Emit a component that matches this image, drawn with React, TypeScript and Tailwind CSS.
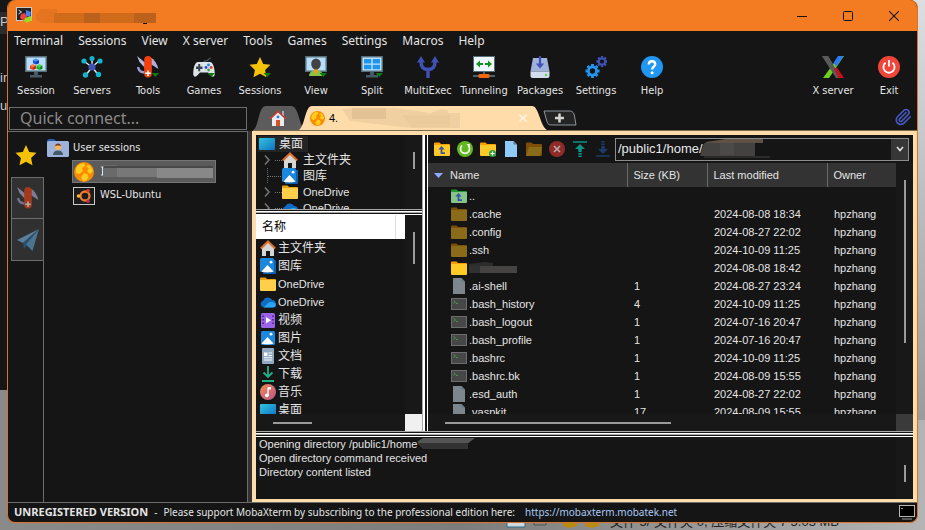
import type { ReactNode } from "react";
import { Paperclip } from "lucide-react";

const menus = ["Terminal", "Sessions", "View", "X server", "Tools", "Games", "Settings", "Macros", "Help"];

function Svg({ size = 16, box = 16, children }: { size?: number; box?: number; children: ReactNode }) {
  return (
    <svg width={size} height={size} viewBox={`0 0 ${box} ${box}`} className="shrink-0" aria-hidden="true">
      {children}
    </svg>
  );
}

/* ---------- toolbar icons, 22px grid ---------- */

function Monitor({ children, fill = "#b9defa" }: { children?: ReactNode; fill?: string }) {
  return (
    <>
      <rect width="22" height="16" y="0" fill="#546e7a" />
      <rect x="1.5" y="1.5" width="19" height="13" fill={fill} />
      <path d="M9 16h4v3h4v2.5H5V19h4z" fill="#455a64" />
      {children}
    </>
  );
}

function Cube({ x, y, a, b, c }: { x: number; y: number; a: string; b: string; c: string }) {
  return (
    <g transform={`translate(${x} ${y})`}>
      <path d="M3 0l3 1.4-3 1.5-3-1.5z" fill={a} />
      <path d="M0 1.4l3 1.5V6L0 4.7z" fill={b} />
      <path d="M6 1.4L3 2.9V6l3-1.3z" fill={c} />
    </g>
  );
}

const DownMark = () => <path d="M14.5 17h7.5l-3.7 4z" fill="#0d7a12" />;

function Knife({ mark = true }: { mark?: boolean }) {
  return (
    <>
      <path d="M0 0l8 6.500v5.500L2.500 6z" fill="#b7b6dc" />
      <path d="M13.500 1.500c4 2 6.500 6 8 11.500L13.500 8z" fill="#b0afd8" />
      <path d="M1 11c1 5 4 5.500 8 5.500" fill="none" stroke="#9d9ccd" strokeWidth="2.400" />
      <rect x="7.200" y="0" width="7.600" height="21.500" rx="3.800" fill="#f4400f" />
      <path d="M10.200 14.500h1.600v2h2v1.600h-2v2h-1.600v-2h-2v-1.600h2z" fill="#fff" />
      {mark && <DownMark />}
    </>
  );
}

const star = "M11 1l3.200 6.900 7.300.9-5.400 5.100 1.400 7.400L11 17.700l-6.500 3.600 1.400-7.400L.5 8.800l7.300-.9z";

function Gear({ cx, cy, r, fill }: { cx: number; cy: number; r: number; fill: string }) {
  const spokes = [0, 45, 90, 135];
  return (
    <g transform={`translate(${cx} ${cy})`} fill="none" stroke={fill}>
      <circle r={r * 0.58} strokeWidth={r * 0.4} />
      {spokes.map((a) => (
        <path
          key={a}
          d={`M0 ${-r}V${-r * 0.7}M0 ${r * 0.7}V${r}`}
          strokeWidth={r * 0.42}
          transform={`rotate(${a})`}
        />
      ))}
    </g>
  );
}

const toolIcons: Record<string, ReactNode> = {
  Session: (
    <Monitor>
      <Cube x={8} y={2.5} a="#4d8dff" b="#1457e0" c="#0b3fb5" />
      <Cube x={5} y={8} a="#ff7a4d" b="#f04a1c" c="#c9300b" />
      <Cube x={11.500} y={8} a="#4ddc50" b="#14b51c" c="#0a8f12" />
    </Monitor>
  ),
  Servers: (
    <>
      <path d="M11 11V3M11 11L4 6M11 11l7-6M11 11l6 7.500M11 11l-6 8" stroke="#d5e6ee" strokeWidth="1.500" />
      <circle cx="11" cy="11" r="3.600" fill="#3f51b5" />
      <g fill="#12b5cb">
        <circle cx="11" cy="2.500" r="2.500" />
        <circle cx="3" cy="5" r="2.600" />
        <circle cx="19" cy="5" r="2.600" />
        <circle cx="4.500" cy="19" r="2.700" />
        <circle cx="17.500" cy="18.500" r="2.700" />
      </g>
    </>
  ),
  Tools: <Knife />,
  Games: (
    <>
      <path d="M10.500 7c0-3 3-1.500 4.500-3 1-1 1.500-2 3-2" fill="none" stroke="#4a5c66" strokeWidth="1.200" />
      <path d="M5 6h12c3 0 4.500 5.500 4.800 11 .2 4-2.300 4.500-4 2.500L15 16.500H7l-2.800 3c-1.700 2-4.200 1.500-4-2.500C.5 11.500 2 6 5 6z" fill="#dfe3e6" />
      <path d="M5.200 8h2v2.500h2.300v2.500H7.200v2.300h-2V13H3v-2.500h2.200z" fill="#37474f" />
      <circle cx="15.500" cy="9" r="1.400" fill="#1e88e5" />
      <circle cx="13" cy="11.500" r="1.400" fill="#1e4fe5" />
      <circle cx="18.200" cy="11.500" r="1.400" fill="#e53935" />
      <circle cx="15.600" cy="14" r="1.400" fill="#43a047" />
      <DownMark />
    </>
  ),
  Favorites: (
    <>
      <path d={star} fill="#f5c20a" />
      <DownMark />
    </>
  ),
  View: (
    <>
      <rect width="22" height="16" fill="#546e7a" />
      <rect x="1.500" y="1.500" width="19" height="13" fill="#b9defa" />
      <path d="M4 20c0-3 2-5 5-5.500h4c3 .5 5 2.500 5 5.500z" fill="#8bc34a" />
      <path d="M9 12h4v4l-2 2-2-2z" fill="#e8a21c" />
      <ellipse cx="11" cy="8" rx="4.800" ry="5.500" fill="#424242" />
      <DownMark />
    </>
  ),
  Split: (
    <Monitor fill="#bfe3fb">
      <path d="M3 3h7.300v4.500H3zM11.700 3H19v4.500h-7.300zM3 8.700h7.300v4.500H3zM11.700 8.700H19v4.500h-7.300z" fill="#1e96f0" />
      <DownMark />
    </Monitor>
  ),
  MultiExec: (
    <>
      <path d="M4 5c0 5 1 8 7 8.500 6-.5 7-3.500 7-8.500M11 13v9" fill="none" stroke="#3f51b5" strokeWidth="3.500" />
      <path d="M0 6.500L4 0l4 6.500zM14 6.500L18 0l4 6.500z" fill="#3f51b5" />
    </>
  ),
  Tunneling: (
    <>
      <rect width="22" height="16" fill="#546e7a" />
      <rect x="1" y="1" width="20" height="14" fill="#edf6fb" />
      <path d="M3 8l4-3.500V7h3v2H7v2.500zM19 8l-4-3.500V7h-3v2h3v2.500z" fill="#109020" />
      <path d="M11 16v3M0 20h22" stroke="#607d8b" strokeWidth="1.500" />
      <rect x="5.500" y="18" width="11" height="4" rx="1" fill="#f4660f" />
    </>
  ),
  Packages: (
    <>
      <path d="M4 2h14l2.500 13.500h-19z" fill="#9fb2dc" />
      <path d="M1.500 15.500h19V20a2 2 0 0 1-2 2h-15a2 2 0 0 1-2-2z" fill="#d3dcec" />
      <path d="M11 0v9" stroke="#3f51b5" strokeWidth="2.200" />
      <path d="M6.800 7.500h8.400L11 12.500z" fill="#3f51b5" />
      <circle cx="17" cy="19" r="1.200" fill="#5fcf4a" />
    </>
  ),
  Settings: (
    <>
      <Gear cx={7.500} cy={15} r={7} fill="#2196f3" />
      <Gear cx={17} cy={5.500} r={5.500} fill="#3f51b5" />
    </>
  ),
  Help: (
    <>
      <circle cx="11" cy="11" r="11" fill="#2196f3" />
      <path d="M7.800 8.500c0-2 1.300-3.200 3.200-3.200s3.200 1.200 3.200 2.900c0 2.500-3 2.500-3 5.300" fill="none" stroke="#fff" strokeWidth="2.400" />
      <circle cx="11.100" cy="16.700" r="1.500" fill="#fff" />
    </>
  ),
  "X server": (
    <>
      <path d="M17 0h5L7 22H1z" fill="#6fcf1e" />
      <path d="M16 0h5.500l-7 10.500-3-3.500z" fill="#2a7bf5" />
      <path d="M0 0h6l5 8-1.500 5z" fill="#555" />
      <path d="M0 0h6l13 22h-5z" fill="#5a5a5a" />
      <path d="M12 12.500l3-1L22 22h-5.500z" fill="#c3121b" />
    </>
  ),
  Exit: (
    <>
      <circle cx="11" cy="11" r="11" fill="#f0463a" />
      <path d="M7.500 6.800a5.600 5.600 0 1 0 7 0M11 4v6.500" fill="none" stroke="#fff" strokeWidth="1.800" />
    </>
  ),
};

const tools = [
  { icon: "Session", label: "Session" },
  { icon: "Servers", label: "Servers" },
  { icon: "Tools", label: "Tools" },
  { icon: "Games", label: "Games" },
  { icon: "Favorites", label: "Sessions" },
  { icon: "View", label: "View" },
  { icon: "Split", label: "Split" },
  { icon: "MultiExec", label: "MultiExec" },
  { icon: "Tunneling", label: "Tunneling" },
  { icon: "Packages", label: "Packages" },
  { icon: "Settings", label: "Settings" },
  { icon: "Help", label: "Help" },
];

function ToolButton({ icon, label }: { icon: string; label: string }) {
  return (
    <button className="flex w-14 shrink-0 flex-col items-center gap-[5px] pt-[5px] text-[11px] leading-4 text-[#e4e4e4]">
      <Svg size={22} box={22}>{toolIcons[icon]}</Svg>
      <span className="whitespace-nowrap">{label}</span>
    </button>
  );
}

/* ---------- 16px icons ---------- */

const HomeFolder = () => (
  <Svg>
    <path d="M2 7.500L8 2l6 5.500V16H10v-5H6v5H2z" fill="#d6d6d6" />
    <path d="M.8 8.500L8 1.500l7.200 7" fill="none" stroke="#dd6f2b" strokeWidth="2.100" />
  </Svg>
);

const Pictures = ({ stacked = false }: { stacked?: boolean }) => (
  <Svg>
    {stacked && <rect x="3" y="2" width="13" height="14" rx="1" fill="#0a63b0" />}
    <rect x={stacked ? 0 : 1} y={stacked ? 0 : 1} width="14" height="14" rx="1.500" fill="#1b87dd" />
    <path d="M1.500 13.500L7.500 7l6 6.500c-3 1.200-9 1.200-12 0z" fill="#fff" />
    <circle cx="11" cy="4.200" r="1.400" fill="#fff" />
  </Svg>
);

const Folder = ({ fill = "#ffcf4a", tab = "#e8a410", children }: { fill?: string; tab?: string; children?: ReactNode }) => (
  <Svg>
    <path d="M0 2.500a1 1 0 0 1 1-1h4.500L7 3h8a1 1 0 0 1 1 1v4H0z" fill={tab} />
    <path d="M0 4h16v10a1 1 0 0 1-1 1H1a1 1 0 0 1-1-1z" fill={fill} />
    {children}
  </Svg>
);

const Cloud = () => (
  <Svg>
    <path d="M4 13.500a3.600 3.600 0 0 1-.8-7 5 5 0 0 1 9-.5 3.800 3.800 0 0 1 .8 7.500z" fill="#0f6cc4" />
    <path d="M3.500 13.500L9 8.200c4-1 7 .5 6.900 3a2.500 2.500 0 0 1-2.500 2.300z" fill="#2aa3f0" />
  </Svg>
);

const Video = () => (
  <Svg>
    <rect x="1" y="1" width="14" height="15" rx="1.500" fill="#9a63e8" />
    <path d="M2.300 3.500h1.600v1.600H2.300zm0 3.500h1.600v1.600H2.300zm0 3.500h1.600v1.600H2.300zM12.200 3.500h1.600v1.600h-1.600zm0 3.500h1.600v1.600h-1.600zm0 3.500h1.600v1.600h-1.600z" fill="#4b1f96" />
    <path d="M6 5l5 3.300-5 3.300z" fill="#fff" />
  </Svg>
);

const Doc = () => (
  <Svg>
    <rect x="2" width="12" height="16" rx="1" fill="#8fa9c0" />
    <path d="M4 4.500h3.500V8H4z" fill="#fff" />
    <path d="M8.500 5h3.500M8.500 7.500h3.500M4 9.800h8M4 12h8" stroke="#fff" strokeWidth="1.100" />
  </Svg>
);

const Download = () => (
  <Svg>
    <path d="M8 0v10M3.500 6.500L8 11l4.500-4.500M2 15h12" fill="none" stroke="#1fb088" strokeWidth="1.800" />
  </Svg>
);

const Music = () => (
  <Svg>
    <defs>
      <linearGradient id="music" x1="0" y1="0" x2="1" y2="1">
        <stop offset="0" stopColor="#ef8a4c" />
        <stop offset="1" stopColor="#b8568f" />
      </linearGradient>
    </defs>
    <circle cx="8" cy="8" r="8" fill="url(#music)" />
    <path d="M8 3.500v8" stroke="#fff" strokeWidth="1.300" />
    <path d="M8 3h3v2.500H8z" fill="#fff" />
    <circle cx="6.800" cy="11.300" r="1.900" fill="#fff" />
  </Svg>
);

const Desktop = () => (
  <Svg>
    <defs>
      <linearGradient id="desk" x1="0" y1="0" x2="1" y2="1">
        <stop offset="0" stopColor="#2fc4dc" />
        <stop offset="1" stopColor="#1272c4" />
      </linearGradient>
    </defs>
    <rect y="2" width="16" height="12" rx="1" fill="url(#desk)" />
  </Svg>
);

const Globe = ({ size = 20 }: { size?: number }) => (
  <Svg size={size} box={20}>
    <circle cx="10" cy="10" r="10" fill="#fb8c00" />
    <path d="M4 3.500c2-1.500 4-2.500 6-2.500l1 3-3 2 1 3-4 3-3-1C1.500 8 2 5.500 4 3.500zM12 4l3-1c2 1.500 3.500 4 3.800 6.500L16 12l-3-3 2-2.500zM10 11l3.500 1.500 1 3-2.500 3.500H9l-2-3.500z" fill="#ffcc1f" />
  </Svg>
);

const Page = ({ fill = "#7d868d" }: { fill?: string }) => (
  <Svg>
    <path d="M2 0h8.500L14 3.500V16H2z" fill={fill} />
    <path d="M10.500 0L14 3.500h-3.500z" fill="#5f7a86" />
  </Svg>
);

const Shell = () => (
  <Svg>
    <rect x=".5" y="2.500" width="15" height="11" fill="#474747" stroke="#6d6d6d" />
    <path d="M2.500 4.500l2 1.500-2 1.500M5 7.500h2" fill="none" stroke="#3f9a42" />
  </Svg>
);

const upArrow = (
  <>
    <path d="M7.500 7v5.200H11" fill="none" stroke="#3a55a8" strokeWidth="1.800" />
    <path d="M4.300 8.500L7.500 5l3.200 3.500z" fill="#3a55a8" />
  </>
);

/* ---------- data ---------- */

type Entry = { icon: ReactNode; name: ReactNode; size?: string; date?: string };

const dim = <Folder fill="#8a6b1a" tab="#7a4f0a" />;

const files: Entry[] = [
  { icon: <Folder fill="#86c48a" tab="#1f9a35">{upArrow}</Folder>, name: ".." },
  { icon: dim, name: ".cache", date: "2024-08-08 18:34" },
  { icon: dim, name: ".config", date: "2024-08-27 22:02" },
  { icon: dim, name: ".ssh", date: "2024-10-09 11:25" },
  { icon: <Folder fill="#ffc926" tab="#ff9d00" />, name: <NameMask />, date: "2024-08-08 18:42" },
  { icon: <Page />, name: ".ai-shell", size: "1", date: "2024-08-27 23:24" },
  { icon: <Shell />, name: ".bash_history", size: "4", date: "2024-10-09 11:25" },
  { icon: <Shell />, name: ".bash_logout", size: "1", date: "2024-07-16 20:47" },
  { icon: <Shell />, name: ".bash_profile", size: "1", date: "2024-07-16 20:47" },
  { icon: <Shell />, name: ".bashrc", size: "1", date: "2024-10-09 11:25" },
  { icon: <Shell />, name: ".bashrc.bk", size: "1", date: "2024-08-09 15:55" },
  { icon: <Page />, name: ".esd_auth", size: "1", date: "2024-08-27 22:02" },
  { icon: <Page />, name: ".vaspkit", size: "17", date: "2024-08-09 15:55" },
];

const places = [
  { icon: <HomeFolder />, name: "主文件夹" },
  { icon: <Pictures stacked />, name: "图库" },
  { icon: <Folder />, name: "OneDrive" },
  { icon: <Cloud />, name: "OneDrive" },
  { icon: <Video />, name: "视频" },
  { icon: <Pictures />, name: "图片" },
  { icon: <Doc />, name: "文档" },
  { icon: <Download />, name: "下载" },
  { icon: <Music />, name: "音乐" },
  { icon: <Desktop />, name: "桌面" },
];

/* ---------- masked text ---------- */

function NameMask() {
  return (
    <svg width="48" height="12" viewBox="0 0 48 12" aria-hidden="true">
      <path d="M0 2l16-2 8 1v3H0z" fill="#2c2c2c" />
      <path d="M0 4h12v7H0z" fill="#313131" />
      <path d="M11 4h37v7H11z" fill="#454443" />
    </svg>
  );
}

/* ---------- splitters ---------- */

const HSplit = () => (
  <div className="h-[6px] shrink-0 border-b border-t border-b-white border-t-[#a8a8a8] bg-[#151515] py-px">
    <div className="h-0.5 border-b border-[#a8a8a8] bg-white" />
  </div>
);

/* ---------- window parts ---------- */

function TitleBar() {
  return (
    <header className="flex h-[31px] shrink-0 items-center bg-[#f37b21] pl-2">
      <svg width="17" height="17" viewBox="0 0 17 17" className="shrink-0" aria-hidden="true">
        <rect x=".5" y=".5" width="15" height="13" fill="#222" stroke="#c9c9c9" />
        <path d="M2.500 3l3 2-3 2" fill="none" stroke="#ddd" />
        <path d="M5 7l4-1 2 4-3 4-4-3z" fill="#ee4040" />
        <path d="M10 3l5 2-1 5-4-1z" fill="#4a7df0" />
        <path d="M9 11l6-2 1 4-5 3-3-2z" fill="#9bdb1c" />
      </svg>
      <svg width="120" height="18" viewBox="0 0 120 18" className="ml-[3px]" aria-hidden="true">
        <path d="M0 8l5-6h16v4h99v10H6l-6-4z" fill="#e57420" />
        <path d="M18 6h102v10H18z" fill="#d06b1c" />
        <path d="M48 6h16v10H48zM98 6h22v10H98z" fill="#bb611c" />
        <path d="M107 16h4v1h-4z" fill="#111" />
      </svg>
      <div className="ml-auto flex h-full text-[#1d1208]">
        <button aria-label="Minimize" className="flex w-[46px] items-center justify-center">
          <Svg size={10} box={10}><path d="M0 5.500h10" stroke="currentColor" /></Svg>
        </button>
        <button aria-label="Maximize" className="flex w-[46px] items-center justify-center">
          <Svg size={10} box={10}><rect x=".5" y=".5" width="9" height="9" rx="1" fill="none" stroke="currentColor" /></Svg>
        </button>
        <button aria-label="Close" className="flex w-[46px] items-center justify-center">
          <Svg size={10} box={10}><path d="M0 0l10 10M10 0L0 10" stroke="currentColor" strokeWidth="1.100" /></Svg>
        </button>
      </div>
    </header>
  );
}

function SessionTabs() {
  return (
    <div className="relative flex h-[26px] min-w-0 flex-1 items-end border-b border-[#7a6a52]">
      <button aria-label="Home" className="relative flex h-6 w-[46px] shrink-0 items-center justify-center">
        <svg width="52" height="24" viewBox="0 0 52 24" className="absolute left-0 top-0" aria-hidden="true">
          <path d="M0 24c6-2 5-24 13-24h25c8 0 8 20 14 24z" fill="#5c5c5c" />
        </svg>
        <svg width="18" height="17" viewBox="0 0 18 17" className="relative ml-1" aria-hidden="true">
          <path d="M13 1h2v5h-2z" fill="#aab" />
          <path d="M3 7l6-5 6 5v9H3z" fill="#e9edf2" />
          <path d="M1 9l8-7.500L17 9" fill="none" stroke="#cf3b2a" strokeWidth="1.600" />
          <path d="M7 10h4v6H7z" fill="#d9501e" />
          <circle cx="9" cy="7" r="1.400" fill="#1e88e5" />
        </svg>
      </button>
      <button className="relative flex h-6 w-[248px] shrink-0 items-center pl-[11px] text-[11px] text-black">
        <svg width="250" height="24" viewBox="0 0 250 24" className="absolute left-0 top-0" aria-hidden="true">
          <path d="M0 24C6 20 6 0 13 0h220c7 0 8 20 15 24z" fill="#ffdcaa" />
        </svg>
        <span className="relative flex w-full items-center gap-1">
          <Globe size={15} />
          <span>4.</span>
          <svg width="118" height="22" viewBox="0 0 118 22" aria-hidden="true">
            <path d="M0 2l14-1h40l34 5 12-4 6 1v3h12v15H70L8 14z" fill="#f0cfa0" />
            <path d="M10 1h34v11H10z" fill="#e3c395" />
            <path d="M60 8h48v12H70z" fill="#ebcb9c" />
          </svg>
          <svg width="8" height="8" viewBox="0 0 8 8" className="ml-auto mr-5" aria-hidden="true">
            <path d="M.5 .5l7 7M7.500 .5l-7 7" stroke="#fff8ec" strokeWidth="1.200" />
          </svg>
        </span>
      </button>
      <button aria-label="New tab" className="mb-1 -ml-1">
        <svg width="34" height="16" viewBox="0 0 34 16" aria-hidden="true">
          <path d="M1 1h26c2.500 0 4 2 4.500 5L33 15H8c-3 0-3.500-2-4.500-5z" fill="#242424" stroke="#8d9399" />
          <path d="M12 8h9M16.500 3.500v9" stroke="#d4d4d4" strokeWidth="2.500" />
        </svg>
      </button>
      <button aria-label="Attachments" className="mb-1 ml-auto mr-[5px] text-[#4558bd]">
        <Paperclip className="size-[18px]" strokeWidth={2.200} />
      </button>
    </div>
  );
}

function Sidebar() {
  return (
    <aside className="flex w-60 shrink-0 border-r border-t border-[#6c6c6c]">
      <nav className="flex w-9 shrink-0 flex-col border-r border-[#6c6c6c]">
        <button aria-label="Sessions" className="-mr-px flex h-[45px] items-center justify-center bg-[#151515]">
          <Svg size={22} box={22}><path d={star} fill="#f5c20a" /></Svg>
        </button>
        <button aria-label="Tools" className="ml-[3px] flex h-[41px] items-center justify-center border-l border-t border-[#6c6c6c] bg-[#303030]">
          <span className="opacity-60"><Svg size={22} box={22}><Knife mark={false} /></Svg></span>
        </button>
        <button aria-label="Macros" className="ml-[3px] flex h-[43px] items-center justify-center border-y border-l border-[#6c6c6c] bg-[#303030]">
          <Svg size={22} box={22}>
            <path d="M22 0L0 11l6 3z" fill="#5b7f9a" />
            <path d="M22 0L6 14l1 6 3-3.500z" fill="#28506c" />
            <path d="M22 0L9 15.500l6.500 6.500z" fill="#4c7390" />
          </Svg>
        </button>
      </nav>
      <ul className="flex-1 pl-[3px] pt-1 text-[11px] text-[#e4e4e4]">
        <li className="flex h-6 items-center gap-1">
          <svg width="22" height="18" viewBox="0 0 22 18" aria-hidden="true">
            <path d="M0 2a2 2 0 0 1 2-2h5l2 2h12v6H0z" fill="#2557a7" />
            <rect y="2" width="22" height="16" rx="1.500" fill="#9fb2dc" />
            <path d="M6 16c0-3 2-4.500 5-4.500s5 1.500 5 4.500z" fill="#455a64" />
            <circle cx="11" cy="8" r="3" fill="#ffb74d" />
            <path d="M8 7.500c0-4 6-4 6 0-1-1.300-5-1.300-6 0z" fill="#6d3b1c" />
          </svg>
          User sessions
        </li>
        <li className="ml-[25px] mr-[31px] flex h-[23px] items-center border border-[#757575] bg-[#5b5b5b] pl-px">
          <Globe />
          <svg width="114" height="17" viewBox="0 0 114 17" className="ml-1.5" aria-hidden="true">
            <path d="M1 4h3M2.500 4v8M1 12h3" stroke="#dce6f5" fill="none" />
            <path d="M3 2h14v12H3z" fill="#6a6a6a" />
            <path d="M4 3h109v2H4z" fill="#484848" />
            <path d="M17 5h40v9H17z" fill="#787878" />
            <path d="M57 5h56v10H57z" fill="#888" />
          </svg>
        </li>
        <li className="ml-[26px] flex h-[25px] items-center gap-[5px]">
          <svg width="22" height="18" viewBox="0 0 22 18" aria-hidden="true">
            <rect x=".5" y=".5" width="21" height="17" fill="#1c1c1c" stroke="#c9c9c9" />
            <circle cx="12" cy="9" r="4.500" fill="none" stroke="#ee7a2e" strokeWidth="2.300" />
            <circle cx="5.500" cy="9" r="1.800" fill="#f5b83a" />
            <circle cx="15" cy="3.700" r="1.800" fill="#e0382c" />
            <circle cx="15" cy="14.300" r="1.800" fill="#c22a5a" />
          </svg>
          WSL-Ubuntu
        </li>
      </ul>
    </aside>
  );
}

function TreeRow({ icon, name, twig = true }: { icon: ReactNode; name: string; twig?: boolean }) {
  return (
    <li className="flex h-4 shrink-0 items-center">
      <svg width="26" height="16" viewBox="0 0 26 16" className="shrink-0" aria-hidden="true">
        {twig ? (
          <path d="M9 3.500l4 4.500-4 4.500" fill="none" stroke="#777" strokeWidth="1.500" />
        ) : (
          <path d="M11.500 0v16" stroke="#666" strokeDasharray="1 1" />
        )}
        <path d={twig ? "M19 8.500h7" : "M12 8.500h14"} stroke="#777" strokeDasharray="1 1" />
      </svg>
      {icon}
      <span className="ml-[5px]">{name}</span>
    </li>
  );
}

function LocalPane() {
  return (
    <section className="flex w-[166px] shrink-0 flex-col text-xs text-[#e4e4e4]">
      <div className="flex h-[74px] shrink-0">
        <ul className="min-w-0 flex-1 overflow-hidden pt-px">
          <li className="ml-0.5 flex h-4 w-[50px] items-center gap-1 bg-[#242424] pl-px">
            <Desktop />
            桌面
          </li>
          <TreeRow icon={<HomeFolder />} name="主文件夹" />
          <TreeRow icon={<Pictures stacked />} name="图库" twig={false} />
          <div className="text-[11px]">
            <TreeRow icon={<Folder />} name="OneDrive" />
            <TreeRow icon={<Cloud />} name="OneDrive" />
          </div>
        </ul>
        <div className="flex w-[17px] justify-center bg-[#181818] pt-[17px]">
          <div className="h-[17px] w-0.5 bg-[#9a9a9a]" />
        </div>
      </div>
      <HSplit />
      <div className="flex min-h-0 flex-1">
        <div className="flex min-w-0 flex-1 flex-col overflow-hidden">
          <div className="flex h-6 shrink-0 bg-white text-black">
            <span className="flex w-[140px] items-center border-r border-[#ddd] pl-1.5">名称</span>
          </div>
          <ul className="min-h-0 flex-1 overflow-hidden">
            {places.map((p, i) => (
              <li key={i} className="flex h-[18px] items-center gap-0.5 pl-1">
                {p.icon}
                <span className={p.name === "OneDrive" ? "text-[11px]" : undefined}>{p.name}</span>
              </li>
            ))}
          </ul>
          <div className="flex h-[17px] shrink-0 items-center bg-[#181818] pl-[17px]">
            <div className="h-0.5 w-[39px] bg-[#9a9a9a]" />
          </div>
        </div>
        <div className="flex w-[17px] flex-col items-center bg-[#181818]">
          <div className="mt-[17px] h-8 w-0.5 bg-[#9a9a9a]" />
          <div className="mt-auto h-[17px] w-full bg-[#f0f0f0]" />
        </div>
      </div>
    </section>
  );
}

const paneActions = [
  { label: "Parent folder", icon: <Folder fill="#ffca28" tab="#ff9d00">{upArrow}</Folder> },
  {
    label: "Refresh",
    icon: (
      <Svg>
        <circle cx="8" cy="8" r="8" fill="#62b81f" />
        <path d="M5 4.500a4.500 4.500 0 1 0 6 0" fill="none" stroke="#fff" strokeWidth="1.600" />
        <path d="M9.500 3h3.300v3.300z" fill="#fff" />
      </Svg>
    ),
  },
  {
    label: "New folder",
    icon: (
      <Folder fill="#ffca28" tab="#ff9d00">
        <circle cx="12.500" cy="12.500" r="3.500" fill="#2e9e44" />
        <path d="M10.500 12.500h4M12.500 10.500v4" stroke="#fff" strokeWidth="1.200" />
      </Folder>
    ),
  },
  { label: "New file", icon: <Page fill="#90caf9" /> },
  {
    label: "Open",
    icon: (
      <Folder fill="#7d4e08" tab="#7d4e08">
        <path d="M3 6h13l-2 9H0z" fill="#8a6b1a" />
      </Folder>
    ),
  },
  {
    label: "Delete",
    icon: (
      <Svg>
        <circle cx="8" cy="8" r="8" fill="#8f2c28" />
        <path d="M5 5l6 6M11 5l-6 6" stroke="#b9a5a4" strokeWidth="1.700" />
      </Svg>
    ),
  },
  {
    label: "Upload",
    icon: (
      <Svg>
        <path d="M1 1h14" stroke="#0b9384" strokeWidth="1.500" />
        <path d="M8 3l5 5H9.700v3H6.300V8H3z" fill="#0b9384" />
        <path d="M6.300 12h3.400v1.500H6.300zM6.300 14.500h3.400V16H6.300z" fill="#0b9384" />
      </Svg>
    ),
  },
  {
    label: "Download",
    icon: (
      <Svg>
        <path d="M1 15h14" stroke="#1a3c66" strokeWidth="1.500" />
        <path d="M8 13l5-5H9.700V5H6.300v3H3z" fill="#1a3c66" />
        <path d="M6.300 2.500h3.400V4H6.300zM6.300 0h3.400v1.500H6.300z" fill="#1a3c66" />
      </Svg>
    ),
  },
];

function RemotePane() {
  const th = "h-6 border-r border-[#6a6a6a] p-0 pl-1.5 text-left font-normal";
  return (
    <section className="flex min-w-0 flex-1 flex-col text-[11px] text-[#e4e4e4]">
      <div className="flex h-7 shrink-0 items-center pl-0.5 pr-1">
        {paneActions.map((a) => (
          <button key={a.label} aria-label={a.label} className="flex w-[23px] shrink-0 justify-center">
            {a.icon}
          </button>
        ))}
        <div className="relative ml-px flex h-[23px] min-w-0 flex-1">
          <select
            aria-label="Remote path"
            className="h-full w-full appearance-none border border-[#8c8c8c] bg-[#151515] pl-0.5 text-[13px] text-[#e8e8e8]"
          >
            <option>/public1/home/</option>
          </select>
          <svg width="75" height="20" viewBox="0 0 75 20" className="pointer-events-none absolute left-[85px] top-px" aria-hidden="true">
            <path d="M6 3l20-3h37v4H6z" fill="#5f5144" />
            <path d="M4 4h51v13H0z" fill="#434241" />
            <path d="M20 4h14v12H20z" fill="#4b4a49" />
            <path d="M4 17h66v2H4z" fill="#2b2b2b" />
          </svg>
          <span className="pointer-events-none absolute inset-y-px right-px flex w-[17px] items-center justify-center bg-[#363636]">
            <Svg size={8} box={8}><path d="M1 2l3 3.500L7 2" fill="none" stroke="#e0e0e0" strokeWidth="1.600" /></Svg>
          </span>
        </div>
      </div>
      <div className="flex min-h-0 flex-1">
        <div className="flex min-w-0 flex-1 flex-col">
          <div className="min-h-0 flex-1 overflow-hidden">
            <table className="w-full table-fixed border-collapse">
              <colgroup>
                <col className="w-[199px]" />
                <col className="w-20" />
                <col className="w-[120px]" />
                <col />
              </colgroup>
              <thead className="bg-[#333]">
                <tr>
                  <th className={th}>
                    <span className="flex items-center gap-[7px]">
                      <svg width="9" height="5" viewBox="0 0 9 5" aria-hidden="true"><path d="M0 0h9L4.500 5z" fill="#8fabff" /></svg>
                      Name
                    </span>
                  </th>
                  <th className={th}>Size (KB)</th>
                  <th className={th}>Last modified</th>
                  <th className="h-6 p-0 pl-1.5 text-left font-normal">Owner</th>
                </tr>
              </thead>
              <tbody>
                {files.map((f, i) => (
                  <tr key={i} className="h-[18px]">
                    <td className="p-0 pl-[23px]">
                      <span className="flex h-[18px] items-center gap-0.5">{f.icon}{f.name}</span>
                    </td>
                    <td className="p-0 pl-[7px]">{f.size}</td>
                    <td className="p-0 pl-[7px]">{f.date}</td>
                    <td className="p-0 pl-[7px]">{f.date && "hpzhang"}</td>
                  </tr>
                ))}
              </tbody>
            </table>
          </div>
          <div className="flex h-[17px] shrink-0 items-center bg-[#181818] pl-[17px]">
            <div className="h-0.5 w-[226px] bg-[#9a9a9a]" />
          </div>
        </div>
        <div className="flex w-[17px] flex-col items-center bg-[#181818]">
          <div className="mt-[17px] h-[163px] w-0.5 bg-[#9a9a9a]" />
          <div className="mt-auto h-[17px] w-full bg-[#3a3a3a]" />
        </div>
      </div>
    </section>
  );
}

function TransferLog() {
  return (
    <div className="flex h-[62px] shrink-0 bg-[#151515] text-[11px] leading-[14px] text-[#e4e4e4]">
      <div className="flex-1 pl-[3px]">
        <p className="flex">
          Opening directory /public1/home
          <svg width="60" height="14" viewBox="0 0 60 14" aria-hidden="true">
            <path d="M0 5l6-4h52l-8 6H4z" fill="#545454" />
            <path d="M0 6h51v6H6z" fill="#333" />
          </svg>
        </p>
        <p>Open directory command received</p>
        <p>Directory content listed</p>
      </div>
      <div className="flex w-[17px] justify-center bg-[#181818] pt-7">
        <div className="h-[17px] w-0.5 bg-[#9a9a9a]" />
      </div>
    </div>
  );
}

/* what shows of the desktop round the window */
function Backdrop() {
  return (
    <div className="absolute inset-0 overflow-hidden bg-linear-to-r from-[#8a8a8a] via-[#7d7d7d] to-[#b4b4b4] text-[13px] text-[#c8c8c8]">
      <div className="absolute right-0 top-0 h-[420px] w-8 bg-linear-to-b from-[#dcdee0] to-[#9b9b9b]" />
      <div className="absolute left-0 top-0 h-[390px] w-8 bg-[#161616]" />
      <div className="absolute left-0 top-3 h-[22px] w-8 bg-[#2c2c2c]">Pe</div>
      <div className="absolute left-0 top-[68px]">in</div>
      <div className="absolute left-0 top-[96px]">ug</div>
      <div className="absolute bottom-0 left-[610px] whitespace-nowrap leading-4 text-[#222]">文件 5/ 文件夹 0, 压缩文件夹 7 5.05 MB</div>
      <svg width="110" height="8" viewBox="0 0 110 8" className="absolute bottom-0 left-[500px]" aria-hidden="true">
        <path d="M7 0v5h18V0" fill="#cfd8dc" stroke="#2a6f8f" />
        <path d="M34 0v3h12V0" fill="none" stroke="#555" />
        <path d="M63 0h14v4l-8 2-6-2zM85 0h14v4l-8 2-6-2z" fill="#b98a10" />
      </svg>
    </div>
  );
}

export default function App() {
  return (
    <div className="relative flex h-screen overflow-hidden px-[7px] pb-[7px] font-['Liberation_Sans','Noto_Sans_CJK_SC',sans-serif]">
      <Backdrop />
      <div className="relative flex min-w-0 flex-1 flex-col overflow-hidden rounded-lg border border-t-0 border-[#d9742c] bg-[#151515]">
        <TitleBar />
        <nav className="flex h-5 shrink-0 items-center gap-[15px] pl-1.5 font-['Noto_Sans',sans-serif] text-xs text-[#e4e4e4]">
          {menus.map((m) => (
            <button key={m}>{m}</button>
          ))}
        </nav>
        <div className="flex h-[54px] shrink-0 font-['DejaVu_Sans_Condensed','Noto_Sans',sans-serif]">
          {tools.map((t) => (
            <ToolButton key={t.icon} {...t} />
          ))}
          <div className="ml-auto flex">
            <ToolButton icon="X server" label="X server" />
            <ToolButton icon="Exit" label="Exit" />
          </div>
        </div>
        <div className="flex shrink-0">
          <input
            aria-label="Quick connect"
            placeholder="Quick connect..."
            className="ml-px mr-1.5 mt-0.5 h-[23px] w-[238px] shrink-0 border border-[#6c6c6c] bg-[#151515] pb-0.5 pl-2.5 font-['Noto_Sans',sans-serif] text-base text-white placeholder:text-[#8a8a8a]"
          />
          <SessionTabs />
        </div>
        <main className="flex min-h-0 flex-1">
          <div className="flex font-['DejaVu_Sans_Condensed','Noto_Sans',sans-serif]">
            <Sidebar />
          </div>
          <div className="w-1 shrink-0 bg-[#333]" />
          <div className="flex min-w-0 flex-1 flex-col bg-[#ffdcaa] px-1 pb-[3px] pt-1">
            <div className="flex min-h-0 flex-1 bg-[#151515]">
              <LocalPane />
              <div className="flex w-1.5 shrink-0 justify-between border-l border-[#a8a8a8]">
                <div className="w-0.5 bg-white" />
                <div className="w-px bg-white" />
              </div>
              <RemotePane />
            </div>
            <HSplit />
            <TransferLog />
          </div>
        </main>
        <footer className="flex h-5 shrink-0 items-center gap-1.5 whitespace-nowrap border-t border-[#6c6c6c] pl-1.5 pr-0.5 font-['Noto_Sans',sans-serif] text-[10px] text-[#e4e4e4]">
          <b className="text-[11px]">UNREGISTERED VERSION</b>
          <span>-</span>
          <span>Please support MobaXterm by subscribing to the professional edition here:</span>
          <a href="https://mobaxterm.mobatek.net" className="ml-1 text-[#a9c8f5]">https://mobaxterm.mobatek.net</a>
          <svg width="16" height="15" viewBox="0 0 16 15" className="ml-auto" aria-hidden="true">
            <rect x=".5" y=".5" width="15" height="11" fill="#000" stroke="#b5b5b5" />
            <path d="M2 3.500h2M3 14h10" stroke="#9a9a9a" />
          </svg>
        </footer>
      </div>
    </div>
  );
}
